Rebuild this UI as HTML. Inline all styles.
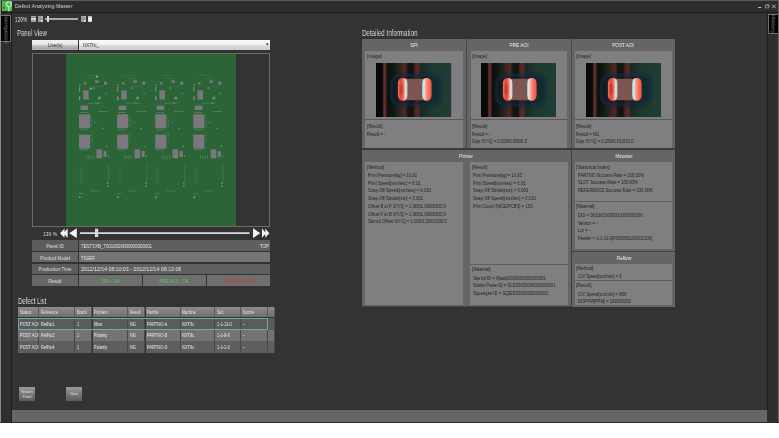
<!DOCTYPE html><html><head><meta charset="utf-8"><style>
html,body{margin:0;padding:0;}
body{width:779px;height:438px;background:#fff;position:relative;overflow:hidden;font-family:"Liberation Sans",sans-serif;}
div{position:absolute;box-sizing:border-box;}
.t{white-space:pre;will-change:transform;}
</style></head><body>
<div style="left:0px;top:0px;width:779px;height:423px;background:#2f2f2f;"></div>
<div style="left:0px;top:0px;width:779px;height:1px;background:#5a5a5a;"></div>
<div style="left:0px;top:0px;width:1.2px;height:423px;background:#8a8a8a;"></div>
<div style="left:778px;top:0px;width:1px;height:423px;background:#6a6a6a;"></div>
<div style="left:0px;top:422.2px;width:779px;height:0.8px;background:#2a2a2a;"></div>
<div style="left:1.2px;top:1px;width:776.8px;height:10.5px;background:#2d2d2d;"></div>
<div style="left:1.2px;top:11.5px;width:776.8px;height:1.2px;background:#1c1c1c;"></div>
<div style="left:1.8px;top:1px;width:10.2px;height:10.3px;background:#48c048;"></div>
<svg style="position:absolute;left:2px;top:1px" width="10" height="11" viewBox="0 0 10 11"><circle cx="6.9" cy="3.2" r="2.5" fill="#50c850" stroke="#c4e8c4" stroke-width="1.1"/><rect x="6.25" y="5.6" width="1.3" height="4.8" fill="#c4e8c4"/><rect x="1" y="5.1" width="1.6" height="2.5" fill="#2a2030" stroke="#a8b040" stroke-width="0.4"/></svg>
<div class="t" style="left:15px;transform-origin:0 50%;transform:scaleX(0.885);top:2.02px;font-size:6px;line-height:8.40px;color:#d4d4d4;">Defect Analyzing Master</div>
<svg style="position:absolute;left:755px;top:2px" width="23" height="10" viewBox="0 0 23 10"><rect x="3.2" y="5.1" width="3" height="0.9" fill="#d8d8d8"/><rect x="10.3" y="3.3" width="3" height="2.6" fill="none" stroke="#9a9a9a" stroke-width="0.7"/><path d="M11.3 3.3 V2.6 H14.2 V5.2 H13.3" fill="none" stroke="#9a9a9a" stroke-width="0.7"/><path d="M17 2.9 L20.8 6 M20.8 2.9 L17 6" stroke="#c8c8c8" stroke-width="0.8"/></svg>
<div style="left:1.2px;top:13px;width:10.8px;height:409.5px;background:#2f2f2f;"></div>
<div style="left:11.3px;top:13px;width:1px;height:409.5px;background:#1f1f1f;"></div>
<div style="left:1.2px;top:14.5px;width:9.6px;height:27.3px;background:#000;border:1px solid #6e6e6e;border-left:none;"></div>
<div class="t" style="left:-7px;top:24.2px;width:27px;height:8px;transform:rotate(90deg);font-size:5.6px;letter-spacing:0.25px;line-height:8px;color:#8a8a8a;text-align:center;">Navigation</div>
<div style="left:767px;top:13px;width:1px;height:397px;background:#1f1f1f;"></div>
<div style="left:768px;top:13px;width:10px;height:409px;background:#2e2e2e;"></div>
<div style="left:768.1px;top:13.5px;width:9.7px;height:20.1px;background:#000;border:1px solid #6e6e6e;border-right:none;"></div>
<div class="t" style="left:763.8px;top:19.6px;width:19px;height:8px;transform:rotate(90deg);font-size:5.6px;letter-spacing:0.2px;line-height:8px;color:#8a8a8a;text-align:center;">History</div>
<div style="left:13px;top:13px;width:754px;height:397px;background:#333333;"></div>
<div style="left:12.3px;top:409.6px;width:754.7px;height:12.6px;background:#666666;"></div>
<div style="left:12.3px;top:409.3px;width:754.7px;height:0.5px;background:#2e2e2e;"></div>
<div class="t" style="left:15.2px;transform-origin:0 50%;transform:scaleX(0.72);top:14.97px;font-size:6.6px;line-height:9.24px;color:#e0e0e0;">120%</div>
<div style="left:30.9px;top:15.9px;width:5px;height:6px;background:linear-gradient(#b0b0b0 0%,#a0a0a0 22%,#7a7a7a 26%,#d4d4d4 40%,#d0d0d0 62%,#9a9a9a 72%,#a4a4a4 100%);"></div>
<div style="left:37.9px;top:15.9px;width:5px;height:6px;background:linear-gradient(#b4b4b4,#9a9a9a);"></div>
<svg style="position:absolute;left:37.9px;top:15.9px" width="5" height="6" viewBox="0 0 5 6"><circle cx="2" cy="2.2" r="1.4" fill="none" stroke="#777" stroke-width="0.6"/><circle cx="4" cy="4.8" r="0.9" fill="#f4f4f4"/></svg>
<div style="left:45.1px;top:18.4px;width:33.4px;height:1.4px;background:#a8a8a8;"></div>
<div style="left:46.9px;top:15.5px;width:2.3px;height:6.6px;background:#dcdcdc;"></div>
<div style="left:81.1px;top:15.9px;width:5px;height:6px;background:linear-gradient(#b4b4b4,#9a9a9a);"></div>
<svg style="position:absolute;left:81.1px;top:15.9px" width="5" height="6" viewBox="0 0 5 6"><circle cx="2" cy="2.2" r="1.4" fill="none" stroke="#777" stroke-width="0.6"/><circle cx="4" cy="4.8" r="0.9" fill="#f4f4f4"/></svg>
<div style="left:87.8px;top:15.9px;width:4.6px;height:6px;background:radial-gradient(circle at 50% 55%,#ffffff 0%,#f0f0f0 35%,#b8b8b8 80%);"></div>
<div class="t" style="left:17.3px;transform-origin:0 50%;transform:scaleX(0.73);top:28.24px;font-size:8.2px;line-height:11.48px;color:#dcdcdc;">Panel View</div>
<div style="left:32px;top:39.7px;width:46px;height:10.7px;background:linear-gradient(#f4f4f4 0%,#e6e6e6 45%,#c4c4c4 55%,#a4a4a4 90%,#bdbdbd 100%);"></div>
<div class="t" style="left:-145px;width:400px;text-align:center;transform:scaleX(0.8);top:41.42px;font-size:6px;line-height:8.40px;color:#2a2a2a;">Line(s)</div>
<div style="left:79px;top:39.8px;width:191px;height:10.5px;background:linear-gradient(#fafafa 0%,#eeeeee 45%,#d8d8d8 60%,#cfcfcf 100%);"></div>
<div class="t" style="left:82.9px;transform-origin:0 50%;transform:scaleX(0.82);top:41.91px;font-size:5.5px;line-height:7.70px;color:#333;">NXTIIc_</div>
<svg style="position:absolute;left:265px;top:43px" width="4" height="4" viewBox="0 0 4 4"><path d="M1 0.6 L3.6 0.6 L2.3 2.6 Z" fill="#111"/></svg>
<div style="left:31.5px;top:52.5px;width:238.8px;height:174.2px;background:#333;border:1px solid #6c6c6c;"></div>
<svg style="position:absolute;left:66px;top:53.7px" width="170" height="172.3" viewBox="66 53.7 170 172.3"><rect x="66" y="53.7" width="170" height="172.3" fill="#2a6437"/><rect x="83.20" y="90.1" width="5.5" height="9.1" fill="#7a787e"/><rect x="80.50" y="105.3" width="7.6" height="4.3" fill="#7a787e"/><rect x="79.00" y="114" width="11.2" height="14" fill="#7a787e"/><rect x="79.00" y="134.3" width="11.2" height="14.1" fill="#7a787e"/><rect x="96.40" y="149" width="5.6" height="9" fill="#7a787e"/><rect x="103.40" y="150.8" width="3.2" height="5.8" fill="#7a787e"/><rect x="95.10" y="80" width="3.7" height="2.5" fill="#7a787e"/><rect x="104.00" y="81.4" width="3" height="3.2" fill="#7a787e"/><rect x="83.70" y="81.9" width="2.6" height="2.3" fill="#7a787e"/><rect x="79.10" y="83.7" width="1.3" height="2" fill="#7a787e"/><rect x="79.00" y="96" width="1.3" height="4" fill="#8a8a8a"/><rect x="79.00" y="86.5" width="1.1" height="5" fill="#6f8f70"/><rect x="93.30" y="86.3" width="1.5" height="2.5" fill="#7a787e"/><rect x="105.20" y="92.4" width="1.5" height="1.5" fill="#7a787e"/><rect x="98.00" y="96.5" width="3" height="2" fill="#8a8490"/><rect x="97.00" y="102" width="1.5" height="1.5" fill="#7a787e"/><rect x="84.00" y="108.5" width="1" height="1" fill="#6f8f70"/><rect x="80.00" y="112" width="8" height="0.7" fill="#7aa880" opacity="0.55"/><rect x="80.00" y="129.3" width="8" height="0.7" fill="#7aa880" opacity="0.55"/><rect x="80.00" y="149.2" width="8" height="0.7" fill="#7aa880" opacity="0.55"/><rect x="91.50" y="102.4" width="10" height="0.7" fill="#7aa880" opacity="0.55"/><rect x="98.00" y="110.7" width="10" height="0.7" fill="#7aa880" opacity="0.55"/><rect x="86.00" y="155" width="0.7" height="3.6" fill="#7aa880" opacity="0.55"/><rect x="88.30" y="155" width="0.7" height="3.6" fill="#7aa880" opacity="0.55"/><rect x="90.60" y="155" width="0.7" height="3.6" fill="#7aa880" opacity="0.55"/><rect x="92.90" y="155" width="0.7" height="3.6" fill="#7aa880" opacity="0.55"/><rect x="90.00" y="190.3" width="9" height="0.7" fill="#7aa880" opacity="0.55"/><rect x="78.60" y="193" width="4.5" height="0.7" fill="#7aa880" opacity="0.55"/><rect x="79.70" y="166" width="3.3" height="18" fill="#7aa880" opacity="0.1"/><rect x="94.20" y="121.6" width="2.2" height="0.8" fill="#7aa880" opacity="0.55"/><rect x="85.00" y="75" width="10" height="0.6" fill="#7aa880" opacity="0.3"/><rect x="90.00" y="78" width="8" height="0.6" fill="#7aa880" opacity="0.3"/><rect x="96.00" y="86" width="8" height="0.6" fill="#7aa880" opacity="0.35"/><rect x="98.00" y="98.5" width="3" height="0.6" fill="#7aa880" opacity="0.55"/><rect x="88.00" y="103" width="4" height="0.6" fill="#7aa880" opacity="0.55"/><rect x="91.50" y="117.40" width="0.9" height="0.9" fill="#8ab08e" opacity="0.7"/><rect x="91.50" y="120.00" width="0.9" height="0.9" fill="#8ab08e" opacity="0.7"/><rect x="91.50" y="122.60" width="0.9" height="0.9" fill="#8ab08e" opacity="0.7"/><rect x="91.50" y="125.20" width="0.9" height="0.9" fill="#8ab08e" opacity="0.7"/><rect x="91.50" y="132.00" width="0.9" height="0.9" fill="#8ab08e" opacity="0.7"/><rect x="91.50" y="134.60" width="0.9" height="0.9" fill="#8ab08e" opacity="0.7"/><rect x="91.50" y="137.20" width="0.9" height="0.9" fill="#8ab08e" opacity="0.7"/><rect x="91.50" y="139.80" width="0.9" height="0.9" fill="#8ab08e" opacity="0.7"/><rect x="108.20" y="164.80" width="0.9" height="0.9" fill="#8ab08e" opacity="0.7"/><rect x="108.20" y="167.40" width="0.9" height="0.9" fill="#8ab08e" opacity="0.7"/><rect x="108.20" y="170.00" width="0.9" height="0.9" fill="#8ab08e" opacity="0.7"/><rect x="108.20" y="172.60" width="0.9" height="0.9" fill="#8ab08e" opacity="0.7"/><rect x="108.20" y="175.20" width="0.9" height="0.9" fill="#8ab08e" opacity="0.7"/><rect x="108.20" y="177.80" width="0.9" height="0.9" fill="#8ab08e" opacity="0.7"/><rect x="108.20" y="180.40" width="0.9" height="0.9" fill="#8ab08e" opacity="0.7"/><rect x="107.10" y="182.2" width="1.2" height="1.2" fill="#a4aaa4"/><rect x="107.10" y="185" width="1.2" height="1.2" fill="#a4aaa4"/><rect x="79.30" y="196" width="1.1" height="1.9" fill="#a4aaa4"/><rect x="102.40" y="128" width="1" height="1" fill="#a4aaa4"/><rect x="106.60" y="145.4" width="1" height="1" fill="#a4aaa4"/><rect x="107.90" y="155.4" width="1" height="1" fill="#a4aaa4"/><rect x="121.30" y="90.1" width="5.5" height="9.1" fill="#7a787e"/><rect x="118.60" y="105.3" width="7.6" height="4.3" fill="#7a787e"/><rect x="117.10" y="114" width="11.2" height="14" fill="#7a787e"/><rect x="117.10" y="134.3" width="11.2" height="14.1" fill="#7a787e"/><rect x="134.50" y="149" width="5.6" height="9" fill="#7a787e"/><rect x="141.50" y="150.8" width="3.2" height="5.8" fill="#7a787e"/><rect x="133.20" y="80" width="3.7" height="2.5" fill="#7a787e"/><rect x="142.10" y="81.4" width="3" height="3.2" fill="#7a787e"/><rect x="121.80" y="81.9" width="2.6" height="2.3" fill="#7a787e"/><rect x="117.20" y="83.7" width="1.3" height="2" fill="#7a787e"/><rect x="117.10" y="96" width="1.3" height="4" fill="#8a8a8a"/><rect x="117.10" y="86.5" width="1.1" height="5" fill="#6f8f70"/><rect x="131.40" y="86.3" width="1.5" height="2.5" fill="#7a787e"/><rect x="143.30" y="92.4" width="1.5" height="1.5" fill="#7a787e"/><rect x="136.10" y="96.5" width="3" height="2" fill="#8a8490"/><rect x="135.10" y="102" width="1.5" height="1.5" fill="#7a787e"/><rect x="122.10" y="108.5" width="1" height="1" fill="#6f8f70"/><rect x="118.10" y="112" width="8" height="0.7" fill="#7aa880" opacity="0.55"/><rect x="118.10" y="129.3" width="8" height="0.7" fill="#7aa880" opacity="0.55"/><rect x="118.10" y="149.2" width="8" height="0.7" fill="#7aa880" opacity="0.55"/><rect x="129.60" y="102.4" width="10" height="0.7" fill="#7aa880" opacity="0.55"/><rect x="136.10" y="110.7" width="10" height="0.7" fill="#7aa880" opacity="0.55"/><rect x="124.10" y="155" width="0.7" height="3.6" fill="#7aa880" opacity="0.55"/><rect x="126.40" y="155" width="0.7" height="3.6" fill="#7aa880" opacity="0.55"/><rect x="128.70" y="155" width="0.7" height="3.6" fill="#7aa880" opacity="0.55"/><rect x="131.00" y="155" width="0.7" height="3.6" fill="#7aa880" opacity="0.55"/><rect x="128.10" y="190.3" width="9" height="0.7" fill="#7aa880" opacity="0.55"/><rect x="116.70" y="193" width="4.5" height="0.7" fill="#7aa880" opacity="0.55"/><rect x="117.80" y="166" width="3.3" height="18" fill="#7aa880" opacity="0.1"/><rect x="132.30" y="121.6" width="2.2" height="0.8" fill="#7aa880" opacity="0.55"/><rect x="123.10" y="75" width="10" height="0.6" fill="#7aa880" opacity="0.3"/><rect x="128.10" y="78" width="8" height="0.6" fill="#7aa880" opacity="0.3"/><rect x="134.10" y="86" width="8" height="0.6" fill="#7aa880" opacity="0.35"/><rect x="136.10" y="98.5" width="3" height="0.6" fill="#7aa880" opacity="0.55"/><rect x="126.10" y="103" width="4" height="0.6" fill="#7aa880" opacity="0.55"/><rect x="129.60" y="117.40" width="0.9" height="0.9" fill="#8ab08e" opacity="0.7"/><rect x="129.60" y="120.00" width="0.9" height="0.9" fill="#8ab08e" opacity="0.7"/><rect x="129.60" y="122.60" width="0.9" height="0.9" fill="#8ab08e" opacity="0.7"/><rect x="129.60" y="125.20" width="0.9" height="0.9" fill="#8ab08e" opacity="0.7"/><rect x="129.60" y="132.00" width="0.9" height="0.9" fill="#8ab08e" opacity="0.7"/><rect x="129.60" y="134.60" width="0.9" height="0.9" fill="#8ab08e" opacity="0.7"/><rect x="129.60" y="137.20" width="0.9" height="0.9" fill="#8ab08e" opacity="0.7"/><rect x="129.60" y="139.80" width="0.9" height="0.9" fill="#8ab08e" opacity="0.7"/><rect x="146.30" y="164.80" width="0.9" height="0.9" fill="#8ab08e" opacity="0.7"/><rect x="146.30" y="167.40" width="0.9" height="0.9" fill="#8ab08e" opacity="0.7"/><rect x="146.30" y="170.00" width="0.9" height="0.9" fill="#8ab08e" opacity="0.7"/><rect x="146.30" y="172.60" width="0.9" height="0.9" fill="#8ab08e" opacity="0.7"/><rect x="146.30" y="175.20" width="0.9" height="0.9" fill="#8ab08e" opacity="0.7"/><rect x="146.30" y="177.80" width="0.9" height="0.9" fill="#8ab08e" opacity="0.7"/><rect x="146.30" y="180.40" width="0.9" height="0.9" fill="#8ab08e" opacity="0.7"/><rect x="145.20" y="182.2" width="1.2" height="1.2" fill="#a4aaa4"/><rect x="145.20" y="185" width="1.2" height="1.2" fill="#a4aaa4"/><rect x="117.40" y="196" width="1.1" height="1.9" fill="#a4aaa4"/><rect x="140.50" y="128" width="1" height="1" fill="#a4aaa4"/><rect x="144.70" y="145.4" width="1" height="1" fill="#a4aaa4"/><rect x="146.00" y="155.4" width="1" height="1" fill="#a4aaa4"/><rect x="159.40" y="90.1" width="5.5" height="9.1" fill="#7a787e"/><rect x="156.70" y="105.3" width="7.6" height="4.3" fill="#7a787e"/><rect x="155.20" y="114" width="11.2" height="14" fill="#7a787e"/><rect x="155.20" y="134.3" width="11.2" height="14.1" fill="#7a787e"/><rect x="172.60" y="149" width="5.6" height="9" fill="#7a787e"/><rect x="179.60" y="150.8" width="3.2" height="5.8" fill="#7a787e"/><rect x="171.30" y="80" width="3.7" height="2.5" fill="#7a787e"/><rect x="180.20" y="81.4" width="3" height="3.2" fill="#7a787e"/><rect x="159.90" y="81.9" width="2.6" height="2.3" fill="#7a787e"/><rect x="155.30" y="83.7" width="1.3" height="2" fill="#7a787e"/><rect x="155.20" y="96" width="1.3" height="4" fill="#8a8a8a"/><rect x="155.20" y="86.5" width="1.1" height="5" fill="#6f8f70"/><rect x="169.50" y="86.3" width="1.5" height="2.5" fill="#7a787e"/><rect x="181.40" y="92.4" width="1.5" height="1.5" fill="#7a787e"/><rect x="174.20" y="96.5" width="3" height="2" fill="#8a8490"/><rect x="173.20" y="102" width="1.5" height="1.5" fill="#7a787e"/><rect x="160.20" y="108.5" width="1" height="1" fill="#6f8f70"/><rect x="156.20" y="112" width="8" height="0.7" fill="#7aa880" opacity="0.55"/><rect x="156.20" y="129.3" width="8" height="0.7" fill="#7aa880" opacity="0.55"/><rect x="156.20" y="149.2" width="8" height="0.7" fill="#7aa880" opacity="0.55"/><rect x="167.70" y="102.4" width="10" height="0.7" fill="#7aa880" opacity="0.55"/><rect x="174.20" y="110.7" width="10" height="0.7" fill="#7aa880" opacity="0.55"/><rect x="162.20" y="155" width="0.7" height="3.6" fill="#7aa880" opacity="0.55"/><rect x="164.50" y="155" width="0.7" height="3.6" fill="#7aa880" opacity="0.55"/><rect x="166.80" y="155" width="0.7" height="3.6" fill="#7aa880" opacity="0.55"/><rect x="169.10" y="155" width="0.7" height="3.6" fill="#7aa880" opacity="0.55"/><rect x="166.20" y="190.3" width="9" height="0.7" fill="#7aa880" opacity="0.55"/><rect x="154.80" y="193" width="4.5" height="0.7" fill="#7aa880" opacity="0.55"/><rect x="155.90" y="166" width="3.3" height="18" fill="#7aa880" opacity="0.1"/><rect x="170.40" y="121.6" width="2.2" height="0.8" fill="#7aa880" opacity="0.55"/><rect x="161.20" y="75" width="10" height="0.6" fill="#7aa880" opacity="0.3"/><rect x="166.20" y="78" width="8" height="0.6" fill="#7aa880" opacity="0.3"/><rect x="172.20" y="86" width="8" height="0.6" fill="#7aa880" opacity="0.35"/><rect x="174.20" y="98.5" width="3" height="0.6" fill="#7aa880" opacity="0.55"/><rect x="164.20" y="103" width="4" height="0.6" fill="#7aa880" opacity="0.55"/><rect x="167.70" y="117.40" width="0.9" height="0.9" fill="#8ab08e" opacity="0.7"/><rect x="167.70" y="120.00" width="0.9" height="0.9" fill="#8ab08e" opacity="0.7"/><rect x="167.70" y="122.60" width="0.9" height="0.9" fill="#8ab08e" opacity="0.7"/><rect x="167.70" y="125.20" width="0.9" height="0.9" fill="#8ab08e" opacity="0.7"/><rect x="167.70" y="132.00" width="0.9" height="0.9" fill="#8ab08e" opacity="0.7"/><rect x="167.70" y="134.60" width="0.9" height="0.9" fill="#8ab08e" opacity="0.7"/><rect x="167.70" y="137.20" width="0.9" height="0.9" fill="#8ab08e" opacity="0.7"/><rect x="167.70" y="139.80" width="0.9" height="0.9" fill="#8ab08e" opacity="0.7"/><rect x="184.40" y="164.80" width="0.9" height="0.9" fill="#8ab08e" opacity="0.7"/><rect x="184.40" y="167.40" width="0.9" height="0.9" fill="#8ab08e" opacity="0.7"/><rect x="184.40" y="170.00" width="0.9" height="0.9" fill="#8ab08e" opacity="0.7"/><rect x="184.40" y="172.60" width="0.9" height="0.9" fill="#8ab08e" opacity="0.7"/><rect x="184.40" y="175.20" width="0.9" height="0.9" fill="#8ab08e" opacity="0.7"/><rect x="184.40" y="177.80" width="0.9" height="0.9" fill="#8ab08e" opacity="0.7"/><rect x="184.40" y="180.40" width="0.9" height="0.9" fill="#8ab08e" opacity="0.7"/><rect x="183.30" y="182.2" width="1.2" height="1.2" fill="#a4aaa4"/><rect x="183.30" y="185" width="1.2" height="1.2" fill="#a4aaa4"/><rect x="155.50" y="196" width="1.1" height="1.9" fill="#a4aaa4"/><rect x="178.60" y="128" width="1" height="1" fill="#a4aaa4"/><rect x="182.80" y="145.4" width="1" height="1" fill="#a4aaa4"/><rect x="184.10" y="155.4" width="1" height="1" fill="#a4aaa4"/><rect x="197.50" y="90.1" width="5.5" height="9.1" fill="#7a787e"/><rect x="194.80" y="105.3" width="7.6" height="4.3" fill="#7a787e"/><rect x="193.30" y="114" width="11.2" height="14" fill="#7a787e"/><rect x="193.30" y="134.3" width="11.2" height="14.1" fill="#7a787e"/><rect x="210.70" y="149" width="5.6" height="9" fill="#7a787e"/><rect x="217.70" y="150.8" width="3.2" height="5.8" fill="#7a787e"/><rect x="209.40" y="80" width="3.7" height="2.5" fill="#7a787e"/><rect x="218.30" y="81.4" width="3" height="3.2" fill="#7a787e"/><rect x="198.00" y="81.9" width="2.6" height="2.3" fill="#7a787e"/><rect x="193.40" y="83.7" width="1.3" height="2" fill="#7a787e"/><rect x="193.30" y="96" width="1.3" height="4" fill="#8a8a8a"/><rect x="193.30" y="86.5" width="1.1" height="5" fill="#6f8f70"/><rect x="207.60" y="86.3" width="1.5" height="2.5" fill="#7a787e"/><rect x="219.50" y="92.4" width="1.5" height="1.5" fill="#7a787e"/><rect x="212.30" y="96.5" width="3" height="2" fill="#8a8490"/><rect x="211.30" y="102" width="1.5" height="1.5" fill="#7a787e"/><rect x="198.30" y="108.5" width="1" height="1" fill="#6f8f70"/><rect x="194.30" y="112" width="8" height="0.7" fill="#7aa880" opacity="0.55"/><rect x="194.30" y="129.3" width="8" height="0.7" fill="#7aa880" opacity="0.55"/><rect x="194.30" y="149.2" width="8" height="0.7" fill="#7aa880" opacity="0.55"/><rect x="205.80" y="102.4" width="10" height="0.7" fill="#7aa880" opacity="0.55"/><rect x="212.30" y="110.7" width="10" height="0.7" fill="#7aa880" opacity="0.55"/><rect x="200.30" y="155" width="0.7" height="3.6" fill="#7aa880" opacity="0.55"/><rect x="202.60" y="155" width="0.7" height="3.6" fill="#7aa880" opacity="0.55"/><rect x="204.90" y="155" width="0.7" height="3.6" fill="#7aa880" opacity="0.55"/><rect x="207.20" y="155" width="0.7" height="3.6" fill="#7aa880" opacity="0.55"/><rect x="204.30" y="190.3" width="9" height="0.7" fill="#7aa880" opacity="0.55"/><rect x="192.90" y="193" width="4.5" height="0.7" fill="#7aa880" opacity="0.55"/><rect x="194.00" y="166" width="3.3" height="18" fill="#7aa880" opacity="0.1"/><rect x="208.50" y="121.6" width="2.2" height="0.8" fill="#7aa880" opacity="0.55"/><rect x="199.30" y="75" width="10" height="0.6" fill="#7aa880" opacity="0.3"/><rect x="204.30" y="78" width="8" height="0.6" fill="#7aa880" opacity="0.3"/><rect x="210.30" y="86" width="8" height="0.6" fill="#7aa880" opacity="0.35"/><rect x="212.30" y="98.5" width="3" height="0.6" fill="#7aa880" opacity="0.55"/><rect x="202.30" y="103" width="4" height="0.6" fill="#7aa880" opacity="0.55"/><rect x="205.80" y="117.40" width="0.9" height="0.9" fill="#8ab08e" opacity="0.7"/><rect x="205.80" y="120.00" width="0.9" height="0.9" fill="#8ab08e" opacity="0.7"/><rect x="205.80" y="122.60" width="0.9" height="0.9" fill="#8ab08e" opacity="0.7"/><rect x="205.80" y="125.20" width="0.9" height="0.9" fill="#8ab08e" opacity="0.7"/><rect x="205.80" y="132.00" width="0.9" height="0.9" fill="#8ab08e" opacity="0.7"/><rect x="205.80" y="134.60" width="0.9" height="0.9" fill="#8ab08e" opacity="0.7"/><rect x="205.80" y="137.20" width="0.9" height="0.9" fill="#8ab08e" opacity="0.7"/><rect x="205.80" y="139.80" width="0.9" height="0.9" fill="#8ab08e" opacity="0.7"/><rect x="222.50" y="164.80" width="0.9" height="0.9" fill="#8ab08e" opacity="0.7"/><rect x="222.50" y="167.40" width="0.9" height="0.9" fill="#8ab08e" opacity="0.7"/><rect x="222.50" y="170.00" width="0.9" height="0.9" fill="#8ab08e" opacity="0.7"/><rect x="222.50" y="172.60" width="0.9" height="0.9" fill="#8ab08e" opacity="0.7"/><rect x="222.50" y="175.20" width="0.9" height="0.9" fill="#8ab08e" opacity="0.7"/><rect x="222.50" y="177.80" width="0.9" height="0.9" fill="#8ab08e" opacity="0.7"/><rect x="222.50" y="180.40" width="0.9" height="0.9" fill="#8ab08e" opacity="0.7"/><rect x="221.40" y="182.2" width="1.2" height="1.2" fill="#a4aaa4"/><rect x="221.40" y="185" width="1.2" height="1.2" fill="#a4aaa4"/><rect x="193.60" y="196" width="1.1" height="1.9" fill="#a4aaa4"/><rect x="216.70" y="128" width="1" height="1" fill="#a4aaa4"/><rect x="220.90" y="145.4" width="1" height="1" fill="#a4aaa4"/><rect x="222.20" y="155.4" width="1" height="1" fill="#a4aaa4"/><circle cx="97" cy="76.2" r="1.1" fill="#8fc05a"/><circle cx="91" cy="88.3" r="1.1" fill="#8fc05a"/></svg>
<div class="t" style="left:43.4px;transform-origin:0 50%;transform:scaleX(0.82);top:229.62px;font-size:6px;line-height:8.40px;color:#d8dce0;">139 %</div>
<svg style="position:absolute;left:59px;top:228px" width="212" height="10.5" viewBox="59 228 212 10.5"><path d="M60 233.2 L64.5 228.6 L64.5 237.8 Z M63.2 233.2 L67.7 228.6 L67.7 237.8 Z" fill="#f4f4f4"/><path d="M69.2 233.2 L76.8 228.3 L76.8 238 Z" fill="#f4f4f4"/><rect x="80" y="232.3" width="169.5" height="1.6" fill="#e8e8e8"/><rect x="95" y="228.7" width="3.2" height="8.3" fill="#d8d8d8"/><path d="M253 228.3 L260.3 233.2 L253 238 Z" fill="#f4f4f4"/><path d="M262 228.6 L266 233.2 L262 237.8 Z M265.3 228.6 L269.3 233.2 L265.3 237.8 Z" fill="#f4f4f4"/></svg>
<div style="left:32px;top:240.2px;width:46px;height:10.8px;background:#5c5c5c;"></div>
<div class="t" style="left:-145px;width:400px;text-align:center;transform:scaleX(0.82);top:242.95px;font-size:5.6px;line-height:7.84px;color:#e0e0e0;">Panel ID</div>
<div style="left:79.2px;top:240.2px;width:190.8px;height:10.8px;background:#5f5f5f;"></div>
<div style="left:32px;top:252px;width:46px;height:10.4px;background:#666666;"></div>
<div class="t" style="left:-145px;width:400px;text-align:center;transform:scaleX(0.82);top:254.55px;font-size:5.6px;line-height:7.84px;color:#e0e0e0;">Product Model</div>
<div style="left:79.2px;top:252px;width:190.8px;height:10.4px;background:#767676;"></div>
<div style="left:32px;top:263.9px;width:46px;height:10.1px;background:#5c5c5c;"></div>
<div class="t" style="left:-145px;width:400px;text-align:center;transform:scaleX(0.82);top:266.30px;font-size:5.6px;line-height:7.84px;color:#e0e0e0;">Production Time</div>
<div style="left:79.2px;top:263.9px;width:190.8px;height:10.1px;background:#606060;"></div>
<div style="left:32px;top:275.4px;width:46px;height:10.3px;background:#666666;"></div>
<div class="t" style="left:-145px;width:400px;text-align:center;transform:scaleX(0.82);top:277.90px;font-size:5.6px;line-height:7.84px;color:#e0e0e0;">Result</div>
<div style="left:79.2px;top:275.4px;width:62.7px;height:10.3px;background:#6f6f6f;"></div>
<div style="left:143px;top:275.4px;width:63.2px;height:10.3px;background:#6f6f6f;"></div>
<div style="left:207px;top:275.4px;width:63px;height:10.3px;background:#6f6f6f;"></div>
<div class="t" style="left:80.8px;transform-origin:0 50%;transform:scaleX(0.78);top:243.05px;font-size:5.6px;line-height:7.84px;color:#e8e8e8;">TESTXXB_T0010000000000000001</div>
<div class="t" style="left:-131.5px;width:400px;text-align:right;transform-origin:100% 50%;transform:scaleX(0.8);top:243.05px;font-size:5.6px;line-height:7.84px;color:#e8e8e8;">TOP</div>
<div class="t" style="left:80.8px;transform-origin:0 50%;transform:scaleX(0.8);top:254.55px;font-size:5.6px;line-height:7.84px;color:#e0d8e8;">TIGER</div>
<div class="t" style="left:80.8px;transform-origin:0 50%;transform:scaleX(0.93);top:266.25px;font-size:5.6px;line-height:7.84px;color:#e8e8e8;">2012/12/14 08:10:03 - 2012/12/14 08:13:08</div>
<div class="t" style="left:-89px;width:400px;text-align:center;transform:scaleX(0.85);top:277.95px;font-size:5.6px;line-height:7.84px;color:#5fc75f;">SPI : OK</div>
<div class="t" style="left:-25.599999999999994px;width:400px;text-align:center;transform:scaleX(0.85);top:277.95px;font-size:5.6px;line-height:7.84px;color:#5fc75f;">PRE AOI : OK</div>
<div class="t" style="left:38.5px;width:400px;text-align:center;transform:scaleX(0.85);top:277.95px;font-size:5.6px;line-height:7.84px;color:#e03030;">POST AOI : NG</div>
<div class="t" style="left:17.7px;transform-origin:0 50%;transform:scaleX(0.73);top:295.94px;font-size:8.2px;line-height:11.48px;color:#dcdcdc;">Defect List</div>
<div style="left:17.7px;top:306.8px;width:21.500000000000004px;height:10.7px;background:linear-gradient(#8c8c8c,#6e6e6e);border-right:0.6px solid #5a5a5a;"></div>
<div class="t" style="left:19.5px;transform-origin:0 50%;transform:scaleX(0.8);top:309.63px;font-size:4.6px;line-height:6.44px;color:#e4e4e4;">Station</div>
<div style="left:17.7px;top:318px;width:21.500000000000004px;height:11.6px;background:#5b5b5b;border-right:0.7px solid #484848;"></div>
<div class="t" style="left:19.5px;transform-origin:0 50%;transform:scaleX(0.77);top:320.88px;font-size:5.2px;line-height:7.28px;color:#eeeeee;">POST AOI</div>
<div style="left:17.7px;top:329.6px;width:21.500000000000004px;height:11.4px;background:#737373;border-right:0.7px solid #484848;"></div>
<div class="t" style="left:19.5px;transform-origin:0 50%;transform:scaleX(0.77);top:332.38px;font-size:5.2px;line-height:7.28px;color:#eeeeee;">POST AOI</div>
<div style="left:17.7px;top:341px;width:21.500000000000004px;height:11.6px;background:#5e5e5e;border-right:0.7px solid #484848;"></div>
<div class="t" style="left:19.5px;transform-origin:0 50%;transform:scaleX(0.77);top:343.88px;font-size:5.2px;line-height:7.28px;color:#eeeeee;">POST AOI</div>
<div style="left:39.2px;top:306.8px;width:35.5px;height:10.7px;background:linear-gradient(#8c8c8c,#6e6e6e);border-right:0.6px solid #5a5a5a;"></div>
<div class="t" style="left:41.0px;transform-origin:0 50%;transform:scaleX(0.8);top:309.63px;font-size:4.6px;line-height:6.44px;color:#e4e4e4;">Reference</div>
<div style="left:39.2px;top:318px;width:35.5px;height:11.6px;background:#5b5b5b;border-right:0.7px solid #484848;"></div>
<div class="t" style="left:41.0px;transform-origin:0 50%;transform:scaleX(0.77);top:320.88px;font-size:5.2px;line-height:7.28px;color:#eeeeee;">RefNo1</div>
<div style="left:39.2px;top:329.6px;width:35.5px;height:11.4px;background:#737373;border-right:0.7px solid #484848;"></div>
<div class="t" style="left:41.0px;transform-origin:0 50%;transform:scaleX(0.77);top:332.38px;font-size:5.2px;line-height:7.28px;color:#eeeeee;">RefNo2</div>
<div style="left:39.2px;top:341px;width:35.5px;height:11.6px;background:#5e5e5e;border-right:0.7px solid #484848;"></div>
<div class="t" style="left:41.0px;transform-origin:0 50%;transform:scaleX(0.77);top:343.88px;font-size:5.2px;line-height:7.28px;color:#eeeeee;">RefNo4</div>
<div style="left:74.7px;top:306.8px;width:17.799999999999997px;height:10.7px;background:linear-gradient(#8c8c8c,#6e6e6e);border-right:0.6px solid #5a5a5a;"></div>
<div class="t" style="left:76.5px;transform-origin:0 50%;transform:scaleX(0.8);top:309.63px;font-size:4.6px;line-height:6.44px;color:#e4e4e4;">Board</div>
<div style="left:74.7px;top:318px;width:17.799999999999997px;height:11.6px;background:#5b5b5b;border-right:0.7px solid #484848;"></div>
<div class="t" style="left:76.5px;transform-origin:0 50%;transform:scaleX(0.77);top:320.88px;font-size:5.2px;line-height:7.28px;color:#eeeeee;">1</div>
<div style="left:74.7px;top:329.6px;width:17.799999999999997px;height:11.4px;background:#737373;border-right:0.7px solid #484848;"></div>
<div class="t" style="left:76.5px;transform-origin:0 50%;transform:scaleX(0.77);top:332.38px;font-size:5.2px;line-height:7.28px;color:#eeeeee;">1</div>
<div style="left:74.7px;top:341px;width:17.799999999999997px;height:11.6px;background:#5e5e5e;border-right:0.7px solid #484848;"></div>
<div class="t" style="left:76.5px;transform-origin:0 50%;transform:scaleX(0.77);top:343.88px;font-size:5.2px;line-height:7.28px;color:#eeeeee;">1</div>
<div style="left:92.5px;top:306.8px;width:35.2px;height:10.7px;background:linear-gradient(#8c8c8c,#6e6e6e);border-right:0.6px solid #5a5a5a;"></div>
<div class="t" style="left:94.3px;transform-origin:0 50%;transform:scaleX(0.8);top:309.63px;font-size:4.6px;line-height:6.44px;color:#e4e4e4;">Problem</div>
<div style="left:92.5px;top:318px;width:35.2px;height:11.6px;background:#5b5b5b;border-right:0.7px solid #484848;"></div>
<div class="t" style="left:94.3px;transform-origin:0 50%;transform:scaleX(0.77);top:320.88px;font-size:5.2px;line-height:7.28px;color:#eeeeee;">Miss</div>
<div style="left:92.5px;top:329.6px;width:35.2px;height:11.4px;background:#737373;border-right:0.7px solid #484848;"></div>
<div class="t" style="left:94.3px;transform-origin:0 50%;transform:scaleX(0.77);top:332.38px;font-size:5.2px;line-height:7.28px;color:#eeeeee;">Polarity</div>
<div style="left:92.5px;top:341px;width:35.2px;height:11.6px;background:#5e5e5e;border-right:0.7px solid #484848;"></div>
<div class="t" style="left:94.3px;transform-origin:0 50%;transform:scaleX(0.77);top:343.88px;font-size:5.2px;line-height:7.28px;color:#eeeeee;">Polarity</div>
<div style="left:127.7px;top:306.8px;width:17.799999999999997px;height:10.7px;background:linear-gradient(#8c8c8c,#6e6e6e);border-right:0.6px solid #5a5a5a;"></div>
<div class="t" style="left:129.5px;transform-origin:0 50%;transform:scaleX(0.8);top:309.63px;font-size:4.6px;line-height:6.44px;color:#e4e4e4;">Result</div>
<div style="left:127.7px;top:318px;width:17.799999999999997px;height:11.6px;background:#5b5b5b;border-right:0.7px solid #484848;"></div>
<div class="t" style="left:129.5px;transform-origin:0 50%;transform:scaleX(0.77);top:320.88px;font-size:5.2px;line-height:7.28px;color:#eeeeee;">NG</div>
<div style="left:127.7px;top:329.6px;width:17.799999999999997px;height:11.4px;background:#737373;border-right:0.7px solid #484848;"></div>
<div class="t" style="left:129.5px;transform-origin:0 50%;transform:scaleX(0.77);top:332.38px;font-size:5.2px;line-height:7.28px;color:#eeeeee;">NG</div>
<div style="left:127.7px;top:341px;width:17.799999999999997px;height:11.6px;background:#5e5e5e;border-right:0.7px solid #484848;"></div>
<div class="t" style="left:129.5px;transform-origin:0 50%;transform:scaleX(0.77);top:343.88px;font-size:5.2px;line-height:7.28px;color:#eeeeee;">NG</div>
<div style="left:145.5px;top:306.8px;width:35.0px;height:10.7px;background:linear-gradient(#8c8c8c,#6e6e6e);border-right:0.6px solid #5a5a5a;"></div>
<div class="t" style="left:147.3px;transform-origin:0 50%;transform:scaleX(0.8);top:309.63px;font-size:4.6px;line-height:6.44px;color:#e4e4e4;">PartNo</div>
<div style="left:145.5px;top:318px;width:35.0px;height:11.6px;background:#5b5b5b;border-right:0.7px solid #484848;"></div>
<div class="t" style="left:147.3px;transform-origin:0 50%;transform:scaleX(0.77);top:320.88px;font-size:5.2px;line-height:7.28px;color:#eeeeee;">PARTNO-A</div>
<div style="left:145.5px;top:329.6px;width:35.0px;height:11.4px;background:#737373;border-right:0.7px solid #484848;"></div>
<div class="t" style="left:147.3px;transform-origin:0 50%;transform:scaleX(0.77);top:332.38px;font-size:5.2px;line-height:7.28px;color:#eeeeee;">PARTNO-B</div>
<div style="left:145.5px;top:341px;width:35.0px;height:11.6px;background:#5e5e5e;border-right:0.7px solid #484848;"></div>
<div class="t" style="left:147.3px;transform-origin:0 50%;transform:scaleX(0.77);top:343.88px;font-size:5.2px;line-height:7.28px;color:#eeeeee;">PARTNO-D</div>
<div style="left:180.5px;top:306.8px;width:34.400000000000006px;height:10.7px;background:linear-gradient(#8c8c8c,#6e6e6e);border-right:0.6px solid #5a5a5a;"></div>
<div class="t" style="left:182.3px;transform-origin:0 50%;transform:scaleX(0.8);top:309.63px;font-size:4.6px;line-height:6.44px;color:#e4e4e4;">Machine</div>
<div style="left:180.5px;top:318px;width:34.400000000000006px;height:11.6px;background:#5b5b5b;border-right:0.7px solid #484848;"></div>
<div class="t" style="left:182.3px;transform-origin:0 50%;transform:scaleX(0.77);top:320.88px;font-size:5.2px;line-height:7.28px;color:#eeeeee;">NXTIIc</div>
<div style="left:180.5px;top:329.6px;width:34.400000000000006px;height:11.4px;background:#737373;border-right:0.7px solid #484848;"></div>
<div class="t" style="left:182.3px;transform-origin:0 50%;transform:scaleX(0.77);top:332.38px;font-size:5.2px;line-height:7.28px;color:#eeeeee;">NXTIIc</div>
<div style="left:180.5px;top:341px;width:34.400000000000006px;height:11.6px;background:#5e5e5e;border-right:0.7px solid #484848;"></div>
<div class="t" style="left:182.3px;transform-origin:0 50%;transform:scaleX(0.77);top:343.88px;font-size:5.2px;line-height:7.28px;color:#eeeeee;">NXTIIc</div>
<div style="left:214.9px;top:306.8px;width:26.400000000000006px;height:10.7px;background:linear-gradient(#8c8c8c,#6e6e6e);border-right:0.6px solid #5a5a5a;"></div>
<div class="t" style="left:216.70000000000002px;transform-origin:0 50%;transform:scaleX(0.8);top:309.63px;font-size:4.6px;line-height:6.44px;color:#e4e4e4;">Slot</div>
<div style="left:214.9px;top:318px;width:26.400000000000006px;height:11.6px;background:#5b5b5b;border-right:0.7px solid #484848;"></div>
<div class="t" style="left:216.70000000000002px;transform-origin:0 50%;transform:scaleX(0.77);top:320.88px;font-size:5.2px;line-height:7.28px;color:#eeeeee;">1-1-11-0</div>
<div style="left:214.9px;top:329.6px;width:26.400000000000006px;height:11.4px;background:#737373;border-right:0.7px solid #484848;"></div>
<div class="t" style="left:216.70000000000002px;transform-origin:0 50%;transform:scaleX(0.77);top:332.38px;font-size:5.2px;line-height:7.28px;color:#eeeeee;">1-1-8-0</div>
<div style="left:214.9px;top:341px;width:26.400000000000006px;height:11.6px;background:#5e5e5e;border-right:0.7px solid #484848;"></div>
<div class="t" style="left:216.70000000000002px;transform-origin:0 50%;transform:scaleX(0.77);top:343.88px;font-size:5.2px;line-height:7.28px;color:#eeeeee;">1-1-2-0</div>
<div style="left:241.3px;top:306.8px;width:26.899999999999977px;height:10.7px;background:linear-gradient(#8c8c8c,#6e6e6e);border-right:0.6px solid #5a5a5a;"></div>
<div class="t" style="left:243.10000000000002px;transform-origin:0 50%;transform:scaleX(0.8);top:309.63px;font-size:4.6px;line-height:6.44px;color:#e4e4e4;">Nozzle</div>
<div style="left:241.3px;top:318px;width:26.899999999999977px;height:11.6px;background:#5b5b5b;border-right:0.7px solid #484848;"></div>
<div class="t" style="left:243.10000000000002px;transform-origin:0 50%;transform:scaleX(0.77);top:320.88px;font-size:5.2px;line-height:7.28px;color:#eeeeee;">–</div>
<div style="left:241.3px;top:329.6px;width:26.899999999999977px;height:11.4px;background:#737373;border-right:0.7px solid #484848;"></div>
<div class="t" style="left:243.10000000000002px;transform-origin:0 50%;transform:scaleX(0.77);top:332.38px;font-size:5.2px;line-height:7.28px;color:#eeeeee;">–</div>
<div style="left:241.3px;top:341px;width:26.899999999999977px;height:11.6px;background:#5e5e5e;border-right:0.7px solid #484848;"></div>
<div class="t" style="left:243.10000000000002px;transform-origin:0 50%;transform:scaleX(0.77);top:343.88px;font-size:5.2px;line-height:7.28px;color:#eeeeee;">–</div>
<div style="left:268.2px;top:306.8px;width:7.0px;height:10.7px;background:linear-gradient(#8c8c8c,#6e6e6e);border-right:0.6px solid #5a5a5a;"></div>
<div style="left:268.2px;top:318px;width:7.0px;height:11.6px;background:#5b5b5b;border-right:0.7px solid #484848;"></div>
<div style="left:268.2px;top:329.6px;width:7.0px;height:11.4px;background:#737373;border-right:0.7px solid #484848;"></div>
<div style="left:268.2px;top:341px;width:7.0px;height:11.6px;background:#5e5e5e;border-right:0.7px solid #484848;"></div>
<div style="left:17.7px;top:318px;width:250.3px;height:11.6px;border:0.8px solid #74a8b0;"></div>
<div style="left:19px;top:386.8px;width:16.2px;height:14.3px;background:linear-gradient(#9a9a9a,#5a5a5a);"></div>
<div class="t" style="left:-172.9px;width:400px;text-align:center;transform:scaleX(0.85);top:388.76px;font-size:4.2px;line-height:5.88px;color:#e0e0e0;">Search</div>
<div class="t" style="left:-172.9px;width:400px;text-align:center;transform:scaleX(0.85);top:394.46px;font-size:4.2px;line-height:5.88px;color:#e0e0e0;">Panel</div>
<div style="left:66px;top:386.8px;width:16px;height:14.3px;background:linear-gradient(#9a9a9a,#5a5a5a);"></div>
<div class="t" style="left:-126px;width:400px;text-align:center;transform:scaleX(0.85);top:391.06px;font-size:4.2px;line-height:5.88px;color:#e0e0e0;">View</div>
<div class="t" style="left:362.1px;transform-origin:0 50%;transform:scaleX(0.74);top:28.13px;font-size:8.4px;line-height:11.76px;color:#dcdcdc;">Detailed Information</div>
<div style="left:361.9px;top:39.2px;width:313.4px;height:267.6px;background:#444;"></div>
<div style="left:361.9px;top:39.2px;width:104.30000000000001px;height:109.1px;background:#656565;"></div>
<div class="t" style="left:214.04999999999995px;width:400px;text-align:center;transform:scaleX(0.85);top:41.91px;font-size:5.5px;line-height:7.70px;color:#f2f2f2;">SPI</div>
<div style="left:365.29999999999995px;top:50.8px;width:97.50000000000001px;height:67.8px;background:#7f7f82;"></div>
<div style="left:365.29999999999995px;top:118.6px;width:97.50000000000001px;height:1.0px;background:#5a5a5a;"></div>
<div style="left:365.29999999999995px;top:119.6px;width:97.50000000000001px;height:28.7px;background:#7f7f82;"></div>
<div class="t" style="left:366.59999999999997px;transform-origin:0 50%;transform:scaleX(0.86);top:53.08px;font-size:5.2px;line-height:7.28px;color:#242424;">[Image]</div>
<div class="t" style="left:366.59999999999997px;transform-origin:0 50%;transform:scaleX(0.86);top:123.38px;font-size:5.2px;line-height:7.28px;color:#242424;">[Result]</div>
<div class="t" style="left:366.59999999999997px;transform-origin:0 50%;transform:scaleX(0.79);top:130.77px;font-size:5.4px;line-height:7.56px;color:#242424;">Result = -</div>
<svg style="position:absolute;left:376.45px;top:62.6px" width="75.2" height="54.5" viewBox="0 0 75.2 54.5"><defs><linearGradient id="bgst" x1="0" x2="1" y1="0" y2="0"><stop offset="0.000" stop-color="#060808"/><stop offset="0.086" stop-color="#0a0c0c"/><stop offset="0.100" stop-color="#4a2622"/><stop offset="0.120" stop-color="#6a3630"/><stop offset="0.140" stop-color="#2a1a18"/><stop offset="0.160" stop-color="#0c100e"/><stop offset="0.226" stop-color="#101812"/><stop offset="0.279" stop-color="#1a221c"/><stop offset="0.332" stop-color="#3a2420"/><stop offset="0.386" stop-color="#502a26"/><stop offset="0.426" stop-color="#141614"/><stop offset="0.492" stop-color="#10140f"/><stop offset="0.519" stop-color="#4a2422"/><stop offset="0.559" stop-color="#5a2c28"/><stop offset="0.598" stop-color="#1a2822"/><stop offset="0.731" stop-color="#1c3a30"/><stop offset="1.000" stop-color="#213d36"/></linearGradient><linearGradient id="tl" x1="0" x2="1"><stop offset="0" stop-color="#ff6a5a"/><stop offset="0.35" stop-color="#d8483c"/><stop offset="0.65" stop-color="#ff8a7a"/><stop offset="0.82" stop-color="#f0e8e0"/><stop offset="1" stop-color="#60c8d0"/></linearGradient><linearGradient id="tr" x1="0" x2="1"><stop offset="0" stop-color="#60c8d0"/><stop offset="0.2" stop-color="#e0f0ec"/><stop offset="0.4" stop-color="#ff9a8a"/><stop offset="0.7" stop-color="#ff6a5a"/><stop offset="1" stop-color="#e85a4a"/></linearGradient><filter id="bl" x="-20%" y="-20%" width="140%" height="140%"><feGaussianBlur stdDeviation="0.9"/></filter></defs><rect width="75.2" height="54.5" fill="url(#bgst)"/><rect x="14" y="10.7" width="51.7" height="32.8" rx="10" fill="#0c1a2a" opacity="0.5" filter="url(#bl)"/><rect x="15.5" y="12" width="48.7" height="30.2" rx="9" fill="none" stroke="#1a3a58" stroke-width="1.8" opacity="0.6" filter="url(#bl)"/><rect x="28" y="15.8" width="20" height="21.4" fill="#805450"/><rect x="21.9" y="15" width="9.7" height="22.7" rx="4" ry="5.5" fill="url(#tl)"/><rect x="46" y="15" width="9.6" height="22.7" rx="4" ry="5.5" fill="url(#tr)"/><ellipse cx="25.3" cy="26.5" rx="1.6" ry="5.5" fill="#a02a22" opacity="0.6" filter="url(#bl)"/></svg>
<div style="left:466.2px;top:39.2px;width:1px;height:109.1px;background:#484848;"></div>
<div style="left:467.2px;top:39.2px;width:103.40000000000003px;height:109.1px;background:#656565;"></div>
<div class="t" style="left:318.9px;width:400px;text-align:center;transform:scaleX(0.85);top:41.91px;font-size:5.5px;line-height:7.70px;color:#f2f2f2;">PRE AOI</div>
<div style="left:470.59999999999997px;top:50.8px;width:96.60000000000004px;height:67.8px;background:#7f7f82;"></div>
<div style="left:470.59999999999997px;top:118.6px;width:96.60000000000004px;height:1.0px;background:#5a5a5a;"></div>
<div style="left:470.59999999999997px;top:119.6px;width:96.60000000000004px;height:28.7px;background:#7f7f82;"></div>
<div class="t" style="left:471.9px;transform-origin:0 50%;transform:scaleX(0.86);top:53.08px;font-size:5.2px;line-height:7.28px;color:#242424;">[Image]</div>
<div class="t" style="left:471.9px;transform-origin:0 50%;transform:scaleX(0.86);top:123.38px;font-size:5.2px;line-height:7.28px;color:#242424;">[Result]</div>
<div class="t" style="left:471.9px;transform-origin:0 50%;transform:scaleX(0.79);top:130.77px;font-size:5.4px;line-height:7.56px;color:#242424;">Result = -</div>
<div class="t" style="left:471.9px;transform-origin:0 50%;transform:scaleX(0.79);top:138.17px;font-size:5.4px;line-height:7.56px;color:#242424;">Gap X/Y/Q = 0.000/0.000/0.0</div>
<svg style="position:absolute;left:481.30px;top:62.6px" width="75.2" height="54.5" viewBox="0 0 75.2 54.5"><defs><linearGradient id="bgst" x1="0" x2="1" y1="0" y2="0"><stop offset="0.000" stop-color="#060808"/><stop offset="0.086" stop-color="#0a0c0c"/><stop offset="0.100" stop-color="#4a2622"/><stop offset="0.120" stop-color="#6a3630"/><stop offset="0.140" stop-color="#2a1a18"/><stop offset="0.160" stop-color="#0c100e"/><stop offset="0.226" stop-color="#101812"/><stop offset="0.279" stop-color="#1a221c"/><stop offset="0.332" stop-color="#3a2420"/><stop offset="0.386" stop-color="#502a26"/><stop offset="0.426" stop-color="#141614"/><stop offset="0.492" stop-color="#10140f"/><stop offset="0.519" stop-color="#4a2422"/><stop offset="0.559" stop-color="#5a2c28"/><stop offset="0.598" stop-color="#1a2822"/><stop offset="0.731" stop-color="#1c3a30"/><stop offset="1.000" stop-color="#213d36"/></linearGradient><linearGradient id="tl" x1="0" x2="1"><stop offset="0" stop-color="#ff6a5a"/><stop offset="0.35" stop-color="#d8483c"/><stop offset="0.65" stop-color="#ff8a7a"/><stop offset="0.82" stop-color="#f0e8e0"/><stop offset="1" stop-color="#60c8d0"/></linearGradient><linearGradient id="tr" x1="0" x2="1"><stop offset="0" stop-color="#60c8d0"/><stop offset="0.2" stop-color="#e0f0ec"/><stop offset="0.4" stop-color="#ff9a8a"/><stop offset="0.7" stop-color="#ff6a5a"/><stop offset="1" stop-color="#e85a4a"/></linearGradient><filter id="bl" x="-20%" y="-20%" width="140%" height="140%"><feGaussianBlur stdDeviation="0.9"/></filter></defs><rect width="75.2" height="54.5" fill="url(#bgst)"/><rect x="14" y="10.7" width="51.7" height="32.8" rx="10" fill="#0c1a2a" opacity="0.5" filter="url(#bl)"/><rect x="15.5" y="12" width="48.7" height="30.2" rx="9" fill="none" stroke="#1a3a58" stroke-width="1.8" opacity="0.6" filter="url(#bl)"/><rect x="28" y="15.8" width="20" height="21.4" fill="#805450"/><rect x="21.9" y="15" width="9.7" height="22.7" rx="4" ry="5.5" fill="url(#tl)"/><rect x="46" y="15" width="9.6" height="22.7" rx="4" ry="5.5" fill="url(#tr)"/><ellipse cx="25.3" cy="26.5" rx="1.6" ry="5.5" fill="#a02a22" opacity="0.6" filter="url(#bl)"/></svg>
<div style="left:570.6px;top:39.2px;width:1px;height:109.1px;background:#484848;"></div>
<div style="left:571.6px;top:39.2px;width:103.69999999999993px;height:109.1px;background:#656565;"></div>
<div class="t" style="left:423.45000000000005px;width:400px;text-align:center;transform:scaleX(0.85);top:41.91px;font-size:5.5px;line-height:7.70px;color:#f2f2f2;">POST AOI</div>
<div style="left:575.0px;top:50.8px;width:96.89999999999993px;height:67.8px;background:#7f7f82;"></div>
<div style="left:575.0px;top:118.6px;width:96.89999999999993px;height:1.0px;background:#5a5a5a;"></div>
<div style="left:575.0px;top:119.6px;width:96.89999999999993px;height:28.7px;background:#7f7f82;"></div>
<div class="t" style="left:576.3000000000001px;transform-origin:0 50%;transform:scaleX(0.86);top:53.08px;font-size:5.2px;line-height:7.28px;color:#242424;">[Image]</div>
<div class="t" style="left:576.3000000000001px;transform-origin:0 50%;transform:scaleX(0.86);top:123.38px;font-size:5.2px;line-height:7.28px;color:#242424;">[Result]</div>
<div class="t" style="left:576.3000000000001px;transform-origin:0 50%;transform:scaleX(0.79);top:130.77px;font-size:5.4px;line-height:7.56px;color:#242424;">Result = NG</div>
<div class="t" style="left:576.3000000000001px;transform-origin:0 50%;transform:scaleX(0.79);top:138.17px;font-size:5.4px;line-height:7.56px;color:#242424;">Gap X/Y/Q = 0.250/0.010/10.0</div>
<svg style="position:absolute;left:585.85px;top:62.6px" width="75.2" height="54.5" viewBox="0 0 75.2 54.5"><defs><linearGradient id="bgst" x1="0" x2="1" y1="0" y2="0"><stop offset="0.000" stop-color="#060808"/><stop offset="0.086" stop-color="#0a0c0c"/><stop offset="0.100" stop-color="#4a2622"/><stop offset="0.120" stop-color="#6a3630"/><stop offset="0.140" stop-color="#2a1a18"/><stop offset="0.160" stop-color="#0c100e"/><stop offset="0.226" stop-color="#101812"/><stop offset="0.279" stop-color="#1a221c"/><stop offset="0.332" stop-color="#3a2420"/><stop offset="0.386" stop-color="#502a26"/><stop offset="0.426" stop-color="#141614"/><stop offset="0.492" stop-color="#10140f"/><stop offset="0.519" stop-color="#4a2422"/><stop offset="0.559" stop-color="#5a2c28"/><stop offset="0.598" stop-color="#1a2822"/><stop offset="0.731" stop-color="#1c3a30"/><stop offset="1.000" stop-color="#213d36"/></linearGradient><linearGradient id="tl" x1="0" x2="1"><stop offset="0" stop-color="#ff6a5a"/><stop offset="0.35" stop-color="#d8483c"/><stop offset="0.65" stop-color="#ff8a7a"/><stop offset="0.82" stop-color="#f0e8e0"/><stop offset="1" stop-color="#60c8d0"/></linearGradient><linearGradient id="tr" x1="0" x2="1"><stop offset="0" stop-color="#60c8d0"/><stop offset="0.2" stop-color="#e0f0ec"/><stop offset="0.4" stop-color="#ff9a8a"/><stop offset="0.7" stop-color="#ff6a5a"/><stop offset="1" stop-color="#e85a4a"/></linearGradient><filter id="bl" x="-20%" y="-20%" width="140%" height="140%"><feGaussianBlur stdDeviation="0.9"/></filter></defs><rect width="75.2" height="54.5" fill="url(#bgst)"/><rect x="14" y="10.7" width="51.7" height="32.8" rx="10" fill="#0c1a2a" opacity="0.5" filter="url(#bl)"/><rect x="15.5" y="12" width="48.7" height="30.2" rx="9" fill="none" stroke="#1a3a58" stroke-width="1.8" opacity="0.6" filter="url(#bl)"/><rect x="28" y="15.8" width="20" height="21.4" fill="#805450"/><rect x="21.9" y="15" width="9.7" height="22.7" rx="4" ry="5.5" fill="url(#tl)"/><rect x="46" y="15" width="9.6" height="22.7" rx="4" ry="5.5" fill="url(#tr)"/><ellipse cx="25.3" cy="26.5" rx="1.6" ry="5.5" fill="#a02a22" opacity="0.6" filter="url(#bl)"/></svg>
<div style="left:361.9px;top:148.3px;width:313.4px;height:1.3px;background:#3a3a3a;"></div>
<div style="left:361.9px;top:149.6px;width:208.7px;height:156.9px;background:#656565;"></div>
<div class="t" style="left:266px;width:400px;text-align:center;transform:scaleX(0.85);top:152.91px;font-size:5.5px;line-height:7.70px;color:#f2f2f2;">Printer</div>
<div style="left:365.3px;top:162px;width:97.3px;height:143px;background:#7f7f82;"></div>
<div style="left:470px;top:162px;width:98.2px;height:102.4px;background:#7f7f82;"></div>
<div style="left:470px;top:264.4px;width:98.2px;height:1px;background:#5e5e5e;"></div>
<div style="left:470px;top:265.4px;width:98.2px;height:39.6px;background:#7f7f82;"></div>
<div class="t" style="left:367px;transform-origin:0 50%;transform:scaleX(0.86);top:163.68px;font-size:5.2px;line-height:7.28px;color:#242424;">[Method]</div>
<div class="t" style="left:368.2px;transform-origin:0 50%;transform:scaleX(0.785);top:171.77px;font-size:5.4px;line-height:7.56px;color:#242424;">Print Pressure[kg] = 10.00</div>
<div class="t" style="left:368.2px;transform-origin:0 50%;transform:scaleX(0.785);top:179.52px;font-size:5.4px;line-height:7.56px;color:#242424;">Print Speed[mm/sec] = 0.01</div>
<div class="t" style="left:368.2px;transform-origin:0 50%;transform:scaleX(0.785);top:187.27px;font-size:5.4px;line-height:7.56px;color:#242424;">Snap-Off Speed[mm/sec] = 0.010</div>
<div class="t" style="left:368.2px;transform-origin:0 50%;transform:scaleX(0.785);top:195.02px;font-size:5.4px;line-height:7.56px;color:#242424;">Snap-Off Stroke[mm] = 0.001</div>
<div class="t" style="left:368.2px;transform-origin:0 50%;transform:scaleX(0.785);top:202.77px;font-size:5.4px;line-height:7.56px;color:#242424;">Offset B to F X/Y/Q = 1.000/1.000/1000.0</div>
<div class="t" style="left:368.2px;transform-origin:0 50%;transform:scaleX(0.785);top:210.52px;font-size:5.4px;line-height:7.56px;color:#242424;">Offset F to B X/Y/Q = 1.000/1.000/1000.0</div>
<div class="t" style="left:368.2px;transform-origin:0 50%;transform:scaleX(0.785);top:218.27px;font-size:5.4px;line-height:7.56px;color:#242424;">Stencil Offset X/Y/Q = 1.000/1.000/1000.0</div>
<div class="t" style="left:471.5px;transform-origin:0 50%;transform:scaleX(0.86);top:163.68px;font-size:5.2px;line-height:7.28px;color:#242424;">[Result]</div>
<div class="t" style="left:472.5px;transform-origin:0 50%;transform:scaleX(0.785);top:171.77px;font-size:5.4px;line-height:7.56px;color:#242424;">Print Pressure[kg] = 10.00</div>
<div class="t" style="left:472.5px;transform-origin:0 50%;transform:scaleX(0.785);top:179.52px;font-size:5.4px;line-height:7.56px;color:#242424;">Print Speed[mm/sec] = 0.01</div>
<div class="t" style="left:472.5px;transform-origin:0 50%;transform:scaleX(0.785);top:187.27px;font-size:5.4px;line-height:7.56px;color:#242424;">Snap-Off Stroke[mm] = 0.000</div>
<div class="t" style="left:472.5px;transform-origin:0 50%;transform:scaleX(0.785);top:195.02px;font-size:5.4px;line-height:7.56px;color:#242424;">Snap-Off Speed[mm/sec] = 0.010</div>
<div class="t" style="left:472.5px;transform-origin:0 50%;transform:scaleX(0.785);top:202.77px;font-size:5.4px;line-height:7.56px;color:#242424;">Print Count [N/CE/PCBS] = 100</div>
<div class="t" style="left:471.5px;transform-origin:0 50%;transform:scaleX(0.86);top:265.68px;font-size:5.2px;line-height:7.28px;color:#242424;">[Material]</div>
<div class="t" style="left:472.5px;transform-origin:0 50%;transform:scaleX(0.785);top:274.57px;font-size:5.4px;line-height:7.56px;color:#242424;">Stencil ID = MaskID000000000000001</div>
<div class="t" style="left:472.5px;transform-origin:0 50%;transform:scaleX(0.785);top:282.27px;font-size:5.4px;line-height:7.56px;color:#242424;">Solder Paste ID = SLD00000000000000001</div>
<div class="t" style="left:472.5px;transform-origin:0 50%;transform:scaleX(0.785);top:289.97px;font-size:5.4px;line-height:7.56px;color:#242424;">Squeegee ID = SQEID00000000000001</div>
<div style="left:570.6px;top:149.6px;width:1.4px;height:156.9px;background:#3e3e3e;"></div>
<div style="left:572px;top:149.6px;width:103.3px;height:101px;background:#656565;"></div>
<div class="t" style="left:423.6px;width:400px;text-align:center;transform:scaleX(0.85);top:152.91px;font-size:5.5px;line-height:7.70px;color:#f2f2f2;">Mounter</div>
<div style="left:575px;top:162px;width:97.2px;height:39.3px;background:#7f7f82;"></div>
<div style="left:575px;top:201.3px;width:97.2px;height:1px;background:#5e5e5e;"></div>
<div style="left:575px;top:202.3px;width:97.2px;height:47.1px;background:#7f7f82;"></div>
<div class="t" style="left:576.3px;transform-origin:0 50%;transform:scaleX(0.86);top:163.68px;font-size:5.2px;line-height:7.28px;color:#242424;">[Statistical Index]</div>
<div class="t" style="left:578px;transform-origin:0 50%;transform:scaleX(0.785);top:171.77px;font-size:5.4px;line-height:7.56px;color:#242424;">PARTNO Success Rate = 100.00%</div>
<div class="t" style="left:578px;transform-origin:0 50%;transform:scaleX(0.785);top:179.47px;font-size:5.4px;line-height:7.56px;color:#242424;">SLOT Success Rate = 100.00%</div>
<div class="t" style="left:578px;transform-origin:0 50%;transform:scaleX(0.785);top:187.17px;font-size:5.4px;line-height:7.56px;color:#242424;">REFERENCE Success Rate = 100.00%</div>
<div class="t" style="left:576.3px;transform-origin:0 50%;transform:scaleX(0.86);top:203.48px;font-size:5.2px;line-height:7.28px;color:#242424;">[Material]</div>
<div class="t" style="left:578px;transform-origin:0 50%;transform:scaleX(0.785);top:212.07px;font-size:5.4px;line-height:7.56px;color:#242424;">DID = D01000100000100000000K</div>
<div class="t" style="left:578px;transform-origin:0 50%;transform:scaleX(0.785);top:219.77px;font-size:5.4px;line-height:7.56px;color:#242424;">Vendor = -</div>
<div class="t" style="left:578px;transform-origin:0 50%;transform:scaleX(0.785);top:227.47px;font-size:5.4px;line-height:7.56px;color:#242424;">Lot = -</div>
<div class="t" style="left:578px;transform-origin:0 50%;transform:scaleX(0.785);top:235.17px;font-size:5.4px;line-height:7.56px;color:#242424;">Feeder = 1-1-11-0[F000006100000100]</div>
<div style="left:572px;top:250.6px;width:103.3px;height:1.4px;background:#444;"></div>
<div style="left:572px;top:252px;width:103.3px;height:54.8px;background:#656565;"></div>
<div class="t" style="left:423.6px;width:400px;text-align:center;transform:scaleX(0.85);top:254.51px;font-size:5.5px;line-height:7.70px;color:#f2f2f2;">Reflow</div>
<div style="left:575px;top:263.6px;width:97.2px;height:16.8px;background:#7f7f82;"></div>
<div style="left:575px;top:280.4px;width:97.2px;height:0.8px;background:#5e5e5e;"></div>
<div style="left:575px;top:281.2px;width:97.2px;height:23.5px;background:#7f7f82;"></div>
<div class="t" style="left:576.3px;transform-origin:0 50%;transform:scaleX(0.86);top:264.78px;font-size:5.2px;line-height:7.28px;color:#242424;">[Method]</div>
<div class="t" style="left:578px;transform-origin:0 50%;transform:scaleX(0.785);top:272.97px;font-size:5.4px;line-height:7.56px;color:#242424;">C/V Speed[cm/min] = 6</div>
<div class="t" style="left:576.3px;transform-origin:0 50%;transform:scaleX(0.86);top:282.48px;font-size:5.2px;line-height:7.28px;color:#242424;">[Result]</div>
<div class="t" style="left:578px;transform-origin:0 50%;transform:scaleX(0.785);top:290.57px;font-size:5.4px;line-height:7.56px;color:#242424;">C/V Speed[cm/min] = 800</div>
<div class="t" style="left:578px;transform-origin:0 50%;transform:scaleX(0.785);top:297.77px;font-size:5.4px;line-height:7.56px;color:#242424;">DOPPM[PPM] = 100000000</div>
</body></html>
